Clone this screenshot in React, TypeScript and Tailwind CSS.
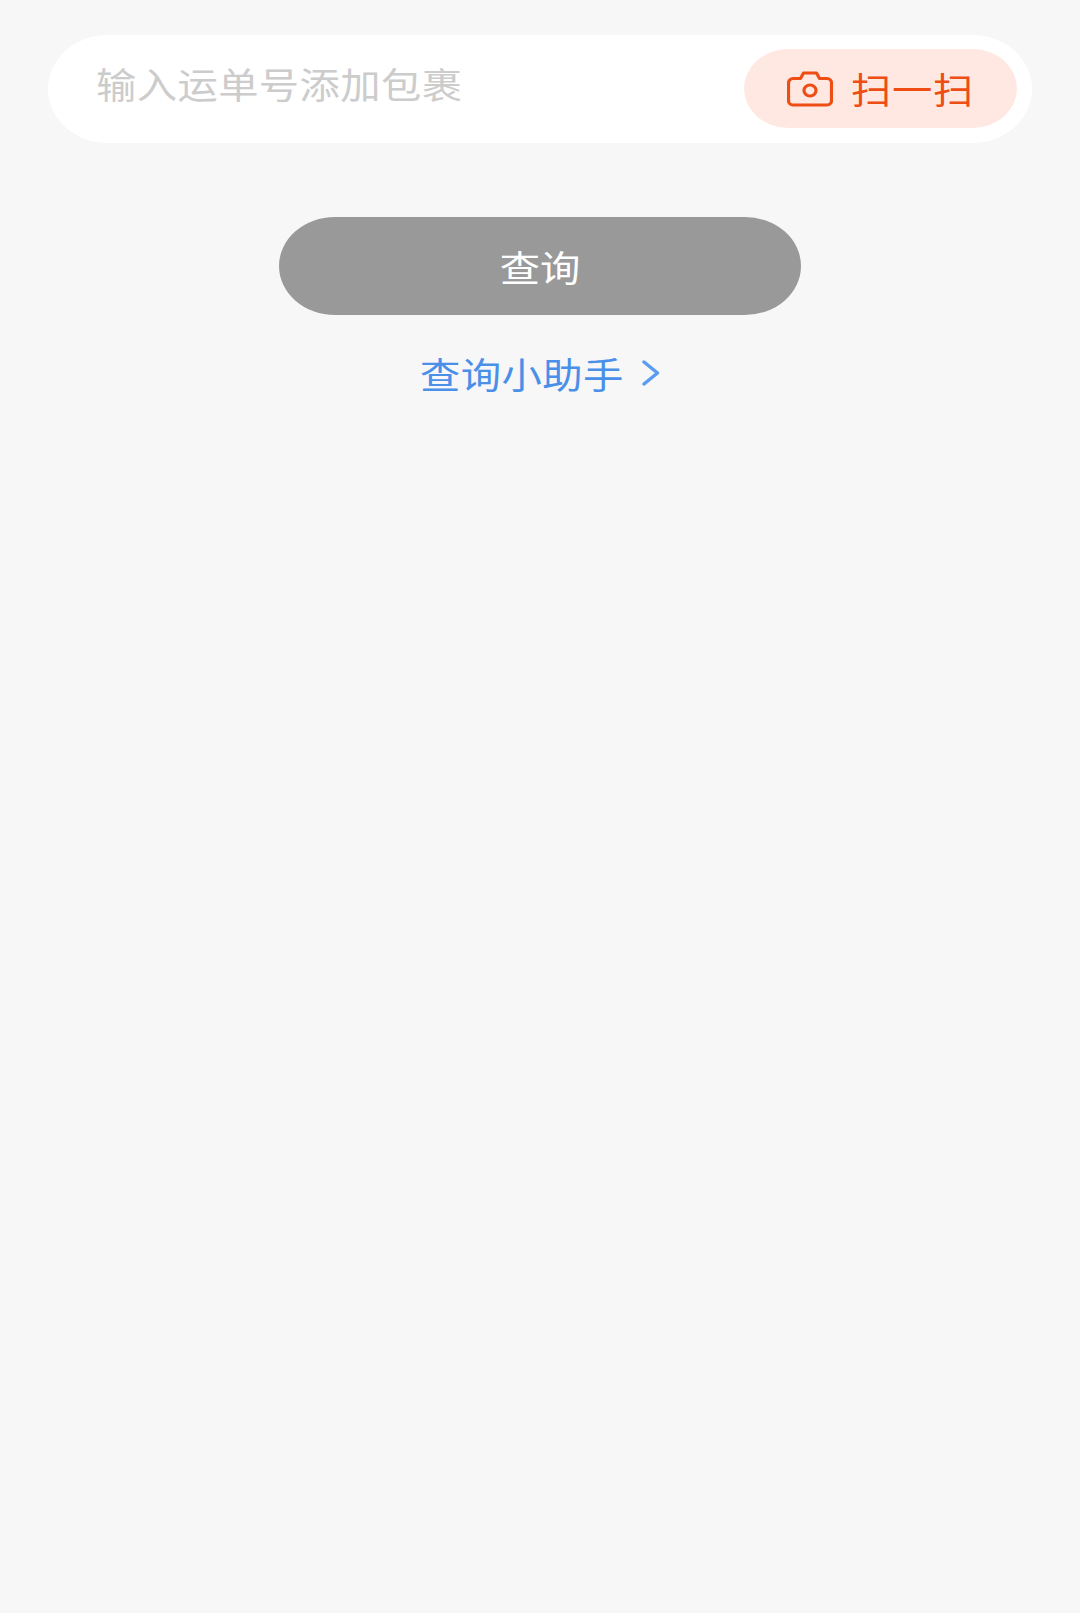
import React from 'react';

export default function App() {
  return (
    <div className="min-h-screen bg-[#f7f7f7] pt-[35px] px-[48px] font-['Noto_Sans_CJK_SC',sans-serif]">
      {/* input bar */}
      <div className="w-[984px] h-[108px] bg-white rounded-[60px/54px] flex items-start justify-between pl-[48px] pr-[15px] pt-[14px]">
        <span className="mt-[10px] inline-block origin-left scale-x-[1.12] whitespace-nowrap text-[36px] leading-[48px] tracking-[0.35px] text-[#cccccc]">输入运单号添加包裹</span>
        <div className="w-[273px] h-[79px] rounded-[45px/40px] bg-[#ffe7e2] flex items-center pl-[43px] gap-[18px]">
          <svg width="46" height="36" viewBox="0 0 46 36" fill="none" stroke="#ee4d14" strokeWidth="3.2" strokeLinejoin="round" strokeLinecap="round">
            <path d="M6 7.5h7.5l3-5.5h13l3 5.5H40a4.5 4.5 0 0 1 4.5 4.5v17.5a4.5 4.5 0 0 1-4.5 4.5H6a4.5 4.5 0 0 1-4.5-4.5V12A4.5 4.5 0 0 1 6 7.5Z" />
            <ellipse cx="23" cy="19.5" rx="6" ry="5.5" />
          </svg>
          <span className="pb-[2px] inline-block origin-left scale-x-[1.12] whitespace-nowrap text-[36px] leading-[48px] tracking-[0.6px] text-[#ee4d14]">扫一扫</span>
        </div>
      </div>

      {/* query button */}
      <div className="mt-[74px] flex flex-col items-center">
        <button className="w-[522px] h-[98px] rounded-[56px/49px] bg-[#999999] text-white">
          <span className="inline-block scale-x-[1.12] text-[36px] leading-[48px]">查询</span>
        </button>
        <div className="mt-[34px] flex items-center gap-[20px] text-[#4a8fe8]">
          <span className="w-[202px] inline-block origin-left scale-x-[1.12] whitespace-nowrap text-[36px] leading-[48px] tracking-[0.4px]">查询小助手</span>
          <svg width="18" height="26" viewBox="0 0 18 26" fill="none" stroke="#5b9cf0" strokeWidth="3.5" strokeLinecap="round" strokeLinejoin="round">
            <path d="M2 2l13.5 11L2 24" />
          </svg>
        </div>
      </div>
    </div>
  );
}
